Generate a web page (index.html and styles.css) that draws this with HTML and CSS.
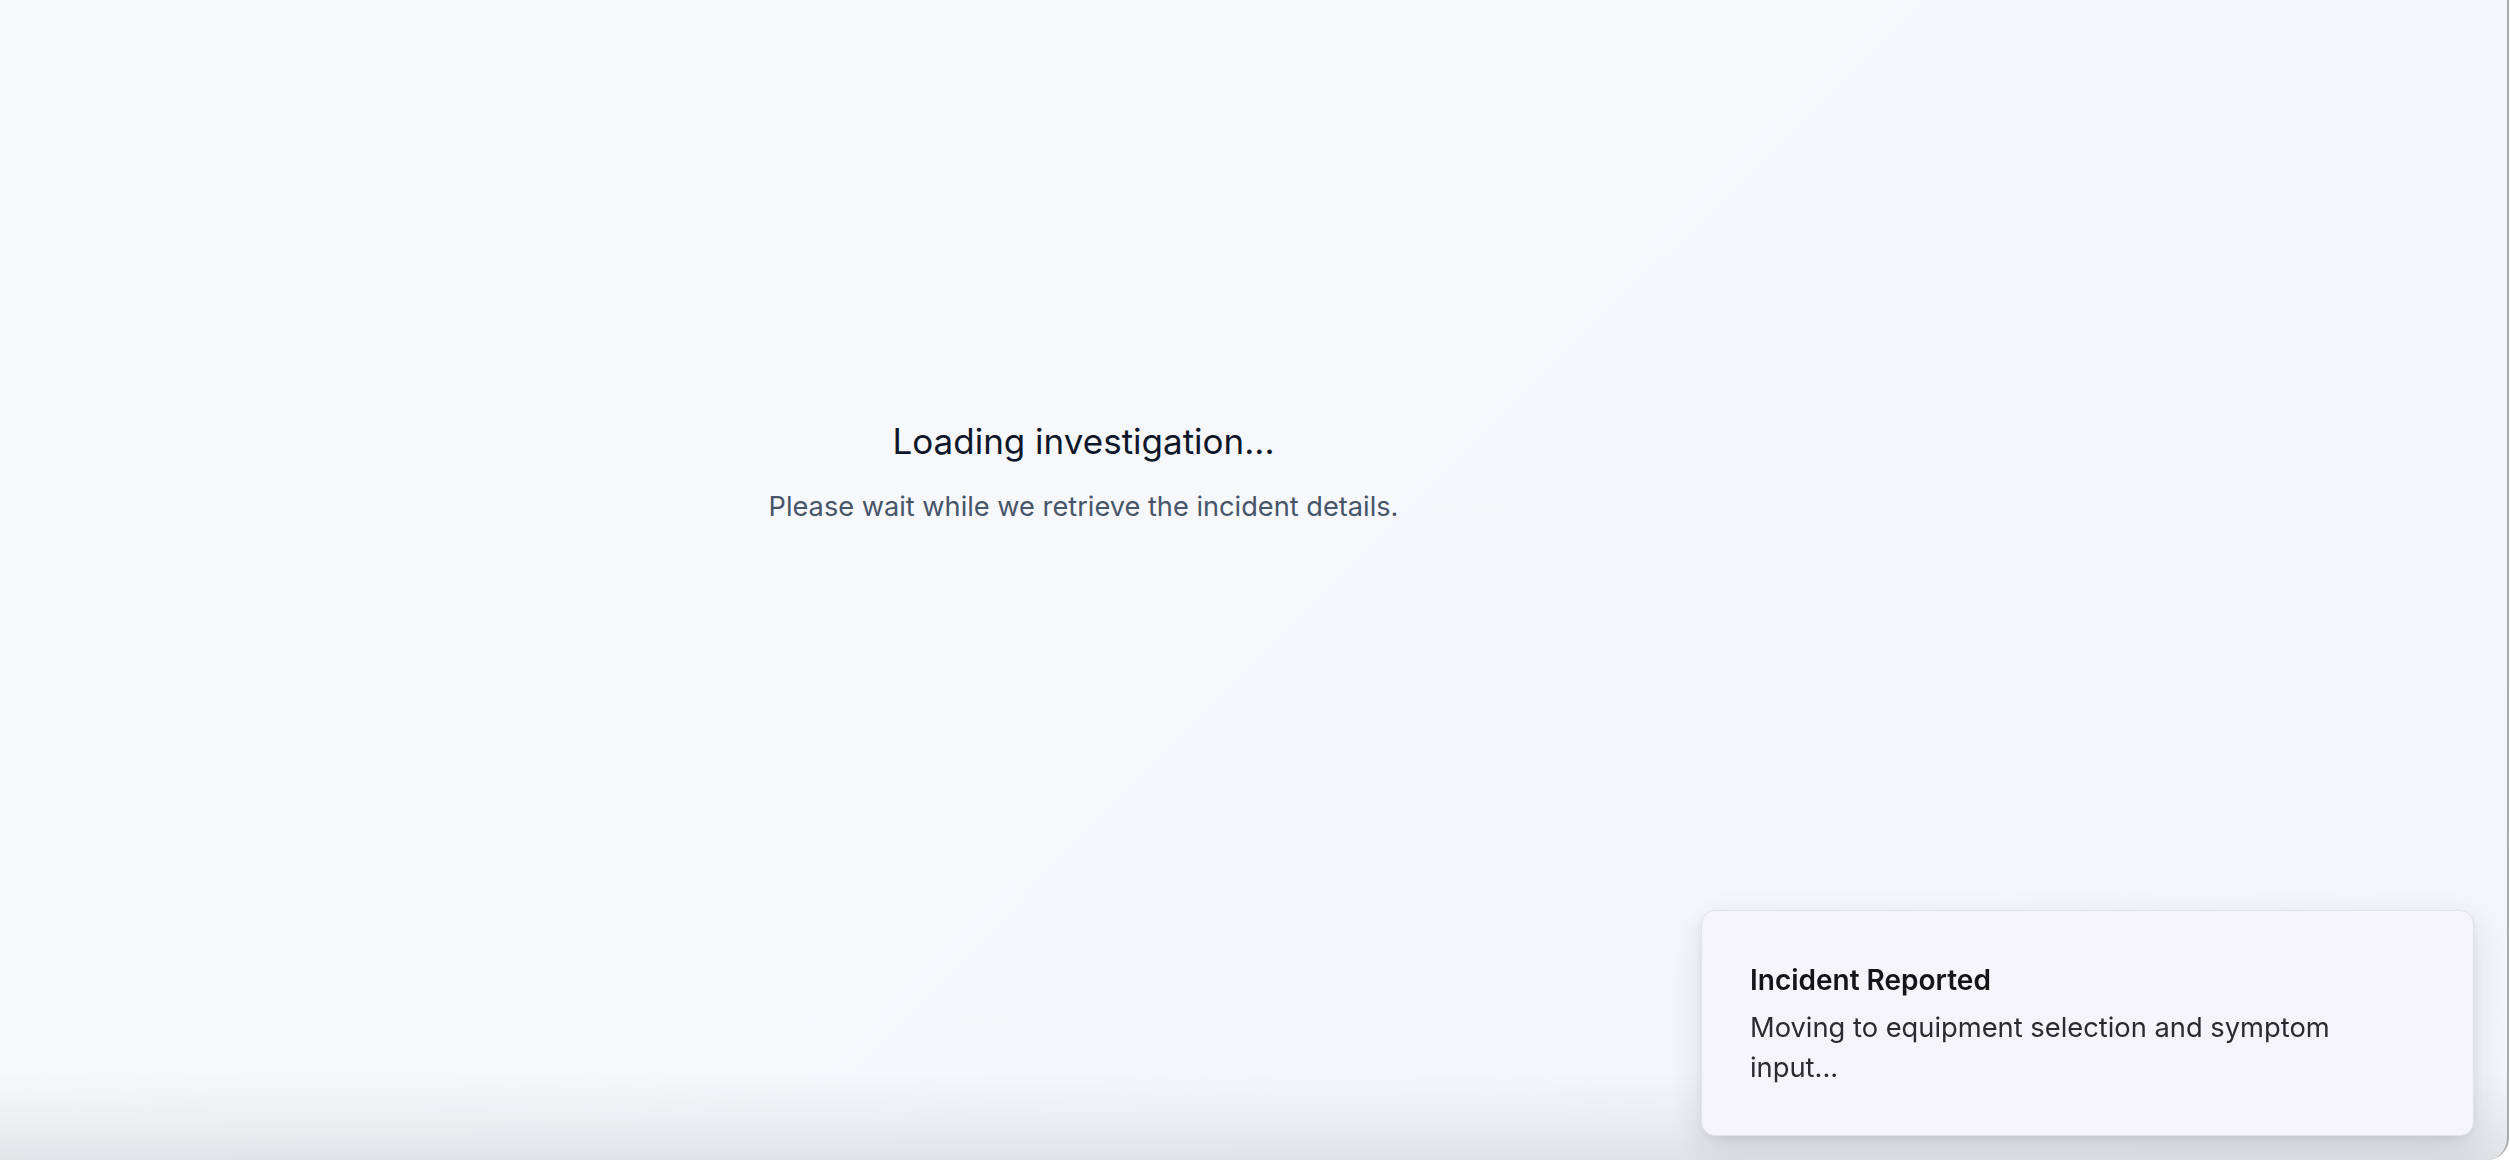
FILE: index.html
```html
<!DOCTYPE html>
<html lang="en">
<head>
<meta charset="utf-8">
<title>Loading investigation</title>
<link rel="stylesheet" href="styles.css">
</head>
<body>
<div class="window">
  <main class="main">
    <div class="loading">
      <h1 class="loading-title">Loading investigation...</h1>
      <p class="loading-text">Please wait while we retrieve the incident details.</p>
    </div>
  </main>
  <aside class="spacer"></aside>
</div>
<div class="toast" role="status">
  <div class="toast-title">Incident Reported</div>
  <div class="toast-desc">Moving to equipment selection and symptom input...</div>
</div>
</body>
</html>
```
FILE: styles.css
```css
html, body {
  margin: 0;
  padding: 0;
  height: 100%;
  background: #ffffff;
  overflow: hidden;
}
body {
  font-family: Inter, "Noto Sans", "Liberation Sans", sans-serif;
}
.window {
  box-sizing: border-box;
  width: 2509px;
  height: 1160px;
  display: flex;
  border-right: 2px solid #a9abae;
  border-bottom-right-radius: 22px;
  background:
    linear-gradient(to bottom, rgba(60, 64, 72, 0) calc(100% - 90px), rgba(60, 64, 72, 0.05) calc(100% - 40px), rgba(60, 64, 72, 0.11) 100%),
    linear-gradient(135deg, #f8f9fb 0%, #f5f7fa 60%, #f3f5f8 100%);
}
.main {
  flex: 0 0 2167px;
  display: flex;
  justify-content: center;
}
.spacer {
  flex: 1;
}
.loading {
  padding-top: 417px;
  text-align: center;
}
.loading-title {
  margin: 0;
  font-size: 35px;
  line-height: 48px;
  font-weight: 400;
  color: #0f172a;
}
.loading-text {
  margin: 22px 0 0;
  font-size: 27.2px;
  line-height: 40px;
  font-weight: 400;
  color: #475569;
}
.toast {
  position: fixed;
  right: 36px;
  bottom: 24px;
  box-sizing: border-box;
  width: 773px;
  height: 226px;
  padding: 49px 50px 46px 48px;
  background: #f5f5f9;
  border: 1px solid #e1e3e8;
  border-radius: 14px;
  box-shadow: 0 12px 34px rgba(30, 36, 48, 0.12), 0 4px 10px rgba(30, 36, 48, 0.06);
}
.toast-title {
  font-size: 28px;
  line-height: 40px;
  font-weight: 600;
  color: #151519;
}
.toast-desc {
  margin-top: 8px;
  font-size: 27.3px;
  line-height: 40px;
  font-weight: 400;
  color: #2a2a30;
}
```
